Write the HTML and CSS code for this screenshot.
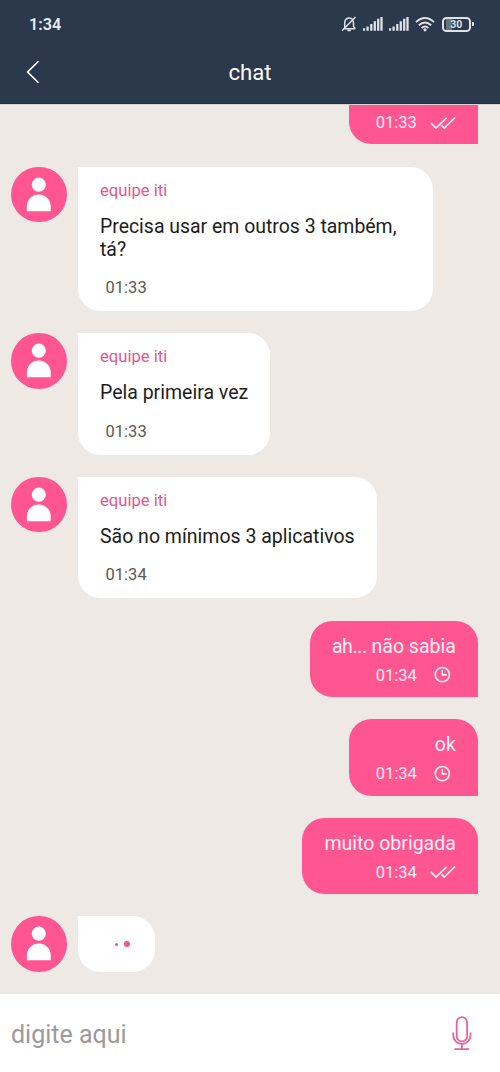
FILE: index.html
```html
<!DOCTYPE html>
<html lang="pt-BR">
<head>
<meta charset="utf-8">
<title>chat</title>
<link rel="stylesheet" href="styles.css">
</head>
<body>
<svg class="defs" width="0" height="0">
  <symbol id="person" viewBox="0 0 56 56"><circle cx="28" cy="17.8" r="7.1"/><path d="M16 44.5V39.5a12 11.8 0 0 1 24 0V44.5Z"/></symbol>
  <symbol id="checks" viewBox="0 0 28 20"><path d="M2.7 9.9 8 15.1 18.6 4.9M13.5 12.3 16.3 15.1 27 4.5" fill="none" stroke="currentColor" stroke-width="1.7"/></symbol>
  <symbol id="clock" viewBox="0 0 28 20"><circle cx="14.3" cy="9.6" r="7.1" fill="none" stroke="currentColor" stroke-width="1.6"/><path d="M14.3 4.9V9.9H18.7" fill="none" stroke="currentColor" stroke-width="1.6"/></symbol>
  <symbol id="signal" viewBox="0 0 20 16"><path d="M1.4 12.3V14.8M5 10.5V14.8M8.7 8V14.8M12.2 5.3V14.8M15.6 2.8V14.8M18.9 1V14.8" transform="translate(-.4 0)" fill="none" stroke="currentColor" stroke-width="2.3"/></symbol>
</svg>
<div class="phone">
  <header class="top">
    <div class="status">
      <span class="clock-text">1:34</span>
      <div class="status-icons">
        <svg class="bell" viewBox="0 0 16 18"><path d="M2.1 13.7H14.1M3.7 13.5V8.2C3.7 5 5.4 3.3 8 3S12.5 5 12.5 8.2V11.5L14.4 13.7M6.4 15.4H9.8M1 15.7 14.5 2" fill="none" stroke="currentColor" stroke-width="1.5"/></svg>
        <svg class="signal"><use href="#signal"/></svg>
        <svg class="signal"><use href="#signal"/></svg>
        <svg class="wifi" viewBox="0 0 20 16"><path d="M.9 6.1Q10-2.1 19.1 6.1M3.8 9.3Q10 3.7 16.2 9.3M6.6 12.1Q10 9.1 13.4 12.1" fill="none" stroke="currentColor" stroke-width="1.9"/><circle cx="10" cy="13.8" r="1.6" fill="currentColor"/></svg>
        <div class="battery"><span>30</span></div>
      </div>
    </div>
    <div class="titlebar">
      <svg class="back" viewBox="0 0 14 24"><path d="M12.5 1.2 1.6 12 12.5 22.8" fill="none" stroke="currentColor" stroke-width="1.6"/></svg>
      <h1>chat</h1>
    </div>
  </header>
  <main class="chat">
    <div class="bubble out"><div class="meta"><time>01:33</time><svg class="state"><use href="#checks"/></svg></div></div>
    <div class="row">
      <svg class="avatar"><use href="#person"/></svg>
      <div class="bubble in wide"><p class="name">equipe iti</p><p class="msg">Precisa usar em outros 3 também,<br>tá?</p><time>01:33</time></div>
    </div>
    <div class="row">
      <svg class="avatar"><use href="#person"/></svg>
      <div class="bubble in"><p class="name">equipe iti</p><p class="msg">Pela primeira vez</p><time>01:33</time></div>
    </div>
    <div class="row">
      <svg class="avatar"><use href="#person"/></svg>
      <div class="bubble in"><p class="name">equipe iti</p><p class="msg">São no mínimos 3 aplicativos</p><time>01:34</time></div>
    </div>
    <div class="bubble out"><p class="msg"><span class="ellipsis">ah...</span> não sabia</p><div class="meta"><time>01:34</time><svg class="state"><use href="#clock"/></svg></div></div>
    <div class="bubble out"><p class="msg">ok</p><div class="meta"><time>01:34</time><svg class="state"><use href="#clock"/></svg></div></div>
    <div class="bubble out"><p class="msg">muito obrigada</p><div class="meta"><time>01:34</time><svg class="state"><use href="#checks"/></svg></div></div>
    <div class="row">
      <svg class="avatar"><use href="#person"/></svg>
      <div class="bubble in typing"><i class="dot small"></i><i class="dot"></i></div>
    </div>
  </main>
  <footer class="composer">
    <span>digite aqui</span>
    <svg class="mic" viewBox="0 0 20 36"><rect x="4.7" y="1.2" width="10.4" height="24.2" rx="5.2"/><path d="M1.2 16.5V19a8.7 9 0 0 0 17.4 0V16.5M9.9 28V33.2M2.4 33.2H17.2"/></svg>
  </footer>
</div>
</body>
</html>
```
FILE: styles.css
```css
* { box-sizing: border-box; }
body { margin: 0; font-family: Roboto, sans-serif; }
p, h1 { margin: 0; font-weight: 400; }
.defs { display: none; }
.phone { width: 500px; height: 1072px; display: flex; flex-direction: column; overflow: hidden; background: #eee9e5; }
.top { height: 103.5px; flex: none; background: #2c384b; color: #fff; border-bottom: 1px solid #222d3f; }
.status { height: 48px; display: flex; align-items: center; justify-content: space-between; padding: 0 26px 0 29px; color: #e7eaf0; }
.clock-text { font-size: 16.2px; font-weight: 600; }
.status-icons { display: flex; align-items: center; color: #dde1e8; }
.bell { width: 16px; height: 18px; margin-right: 6px; }
.signal { width: 20px; height: 16px; margin-right: 6px; }
.wifi { width: 20px; height: 16px; margin-right: 7px; }
.battery { position: relative; width: 29.5px; height: 15px; margin-right: 3px; border: 2px solid currentColor; border-radius: 4.5px; display: flex; align-items: center; justify-content: center; background: linear-gradient(90deg, transparent 2px, #667181 2px, #667181 8px, transparent 8px); font-size: 10.5px; font-weight: 700; line-height: 12px; padding-top: 1px; }
.battery::after { content: ""; position: absolute; right: -4.5px; top: 3.5px; width: 2px; height: 4px; background: currentColor; border-radius: 0 1px 1px 0; }
.titlebar { height: 48px; display: grid; grid-template-columns: 60px 1fr 60px; align-items: center; }
.back { width: 14px; height: 24px; margin-left: 26px; }
.titlebar h1 { font-size: 22.2px; text-align: center; line-height: 26px; }
.chat { flex: 1; min-height: 0; overflow: hidden; display: flex; flex-direction: column; justify-content: flex-end; gap: 22.2px; padding: 0 22px 22px 11px; border-top: 1px solid #d7d3d2; }
.row { display: flex; flex: none; align-items: flex-start; gap: 11.2px; }
.avatar { width: 55.6px; height: 55.6px; border-radius: 50%; background: #ff5591; fill: #fff; flex: none; }
.bubble { flex: none; padding: 14.3px 22.2px 13.5px; white-space: nowrap; }
.in { background: #fff; border-radius: 0 22.2px 22.2px 22.2px; }
.out { align-self: flex-end; height: 76.4px; display: flex; flex-direction: column; justify-content: flex-end; padding-bottom: 11.8px; background: #ff5591; color: #fff0f5; border-radius: 22.2px 22.2px 0 22.2px; text-align: right; }
.name { font-size: 16.67px; line-height: 19.5px; color: #e5578f; margin-bottom: 15.5px; }
.msg { font-size: 19.5px; line-height: 22.8px; }
.in .msg { color: #1d1d1b; margin-bottom: 16.5px; }
.in time { color: #5d5750; margin-left: 5.6px; }
.wide { width: 355.6px; }
.wide .msg { font-size: 19.44px; }
.ellipsis { letter-spacing: -.4px; }
time { display: block; font-size: 16.5px; line-height: 19.5px; }
.meta { display: flex; align-items: center; justify-content: flex-end; padding-left: 4.5px; margin-top: 6.6px; }
.out time { margin-right: 11px; }
.state { width: 28px; height: 20px; }
.typing { width: 77.6px; height: 55.6px; display: flex; align-items: center; padding: 0 0 0 37px; gap: 5.8px; }
.dot { width: 6.4px; height: 6.4px; border-radius: 50%; background: #ec5a92; }
.dot.small { width: 3.4px; height: 3.4px; }
.composer { height: 78px; flex: none; background: #fff; display: flex; align-items: center; justify-content: space-between; padding: 2px 28px 0 11px; font-size: 25px; color: #9b9b9b; }
.mic { width: 20px; height: 36px; fill: none; stroke: #e5659a; stroke-width: 1.8; }
```
